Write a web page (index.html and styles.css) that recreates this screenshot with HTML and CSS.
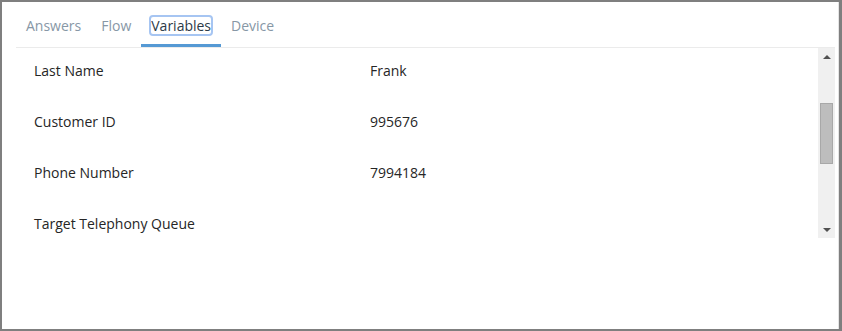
FILE: index.html
```html
<!DOCTYPE html>
<html lang="en">
<head>
    <meta charset="UTF-8">
    <meta name="viewport" content="width=device-width, initial-scale=1.0">
    <title>Variables</title>
    <link rel="stylesheet" href="styles.css">
</head>
<body>
    <div class="window">
        <div class="panel">
            <!-- Tabs -->
            <div class="tabs">
                <div class="tab">Answers</div>
                <div class="tab">Flow</div>
                <div class="tab active"><span class="focus">Variables</span></div>
                <div class="tab">Device</div>
            </div>

            <!-- Variables list with scrollbar -->
            <div class="scroll-area">
                <div class="list">
                    <div class="row"><div class="name">Last Name</div><div class="value">Frank</div></div>
                    <div class="row"><div class="name">Customer ID</div><div class="value">995676</div></div>
                    <div class="row"><div class="name">Phone Number</div><div class="value">7994184</div></div>
                    <div class="row"><div class="name">Target Telephony Queue</div><div class="value"></div></div>
                </div>
                <div class="scrollbar">
                    <div class="arrow"><span class="tri up"></span></div>
                    <div class="track"><div class="thumb"></div></div>
                    <div class="arrow"><span class="tri down"></span></div>
                </div>
            </div>
        </div>
    </div>
</body>
</html>
```

FILE: styles.css
```css
html, body {
    margin: 0;
    padding: 0;
    background: #fff;
}
body {
    font-family: "Open Sans", Arial, sans-serif;
    font-size: 14px;
    color: #2b2b2b;
}
.window {
    width: 842px;
    height: 331px;
    box-sizing: border-box;
    border: 2px solid #7f7f7f;
    border-right-width: 3px;
}
.panel {
    height: 100%;
    box-sizing: border-box;
    border-right: 1px solid #e4e4e4;
    padding: 6px 3px 0 14px;
}
.tabs {
    display: flex;
    border-bottom: 1px solid #ebebeb;
}
.tab {
    padding: 8px 10px 8px;
    line-height: 20px;
    color: #8797a6;
    border-bottom: 3px solid transparent;
}
.tab.active {
    color: #2c3a48;
    border-bottom-color: #5599d4;
}
.focus {
    outline: 2px solid #a6c5f2;
    outline-offset: -1px;
    border-radius: 3px;
    padding: 0 1px;
    margin: 0 -1px;
}
.scroll-area {
    display: flex;
    height: 190px;
    overflow: hidden;
}
.list {
    flex: 1;
    margin-top: -3px;
}
.row {
    display: flex;
    align-items: center;
    height: 51px;
    line-height: 20px;
    padding-left: 18px;
    color: #262626;
}
.name {
    width: 336px;
}
.scrollbar {
    width: 17px;
    background: #f0f0f0;
    display: flex;
    flex-direction: column;
}
.arrow {
    height: 17px;
    display: flex;
    align-items: center;
    justify-content: center;
}
.tri {
    width: 0;
    height: 0;
    border-left: 4px solid transparent;
    border-right: 4px solid transparent;
}
.tri.up {
    border-bottom: 4px solid #505050;
}
.tri.down {
    border-top: 4px solid #505050;
}
.track {
    flex: 1;
}
.thumb {
    margin: 38px 2px 0;
    height: 59px;
    background: #bdbdbd;
    border: 1px solid #a8a8a8;
}
```
